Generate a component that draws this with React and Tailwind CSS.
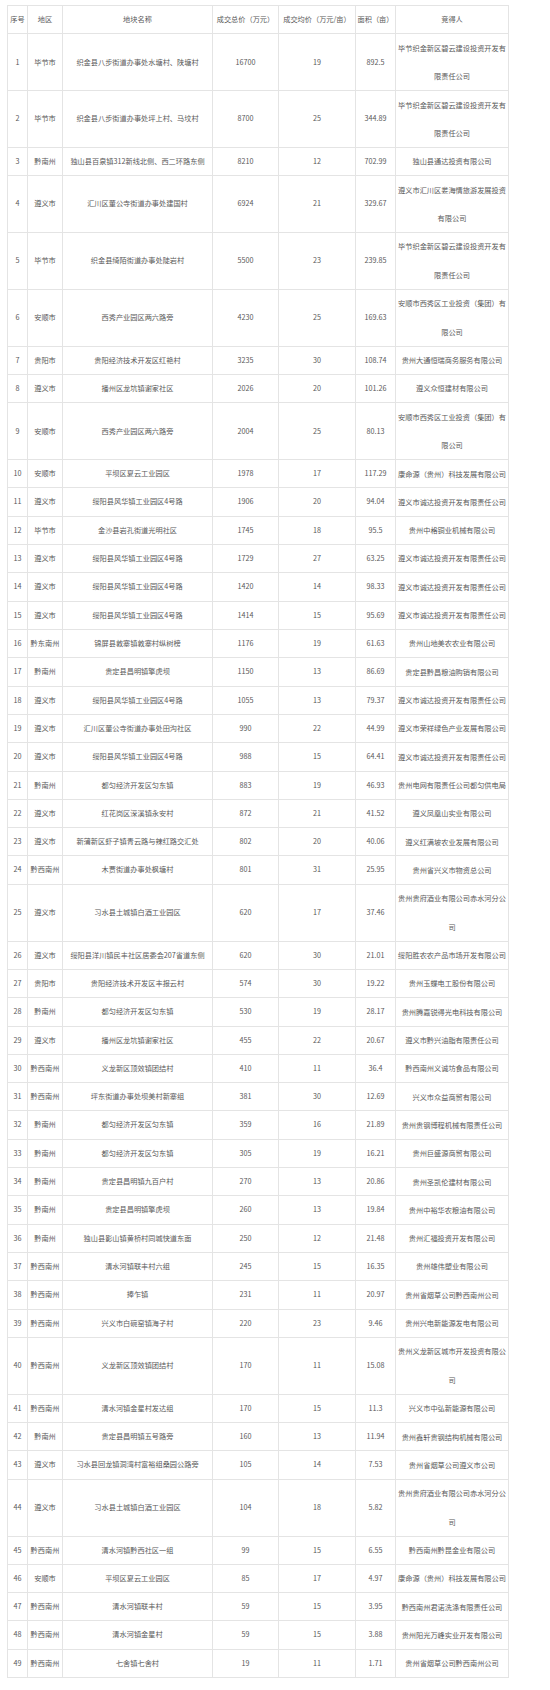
import React from 'react';

const HEAD = ['序号', '地区', '地块名称', '成交总价（万元）', '成交均价（万元/亩）', '面积（亩）', '竞得人'];

// 序号 is the index + 1
const ROWS = [
  ['毕节市', '织金县八步街道办事处水塘村、陕塘村', '16700', '19', '892.5', '毕节织金新区碧云建设投资开发有限责任公司'],
  ['毕节市', '织金县八步街道办事处坪上村、马坟村', '8700', '25', '344.89', '毕节织金新区碧云建设投资开发有限责任公司'],
  ['黔南州', '独山县百泉镇312新线北侧、西二环路东侧', '8210', '12', '702.99', '独山县通达投资有限公司'],
  ['遵义市', '汇川区董公寺街道办事处建国村', '6924', '21', '329.67', '遵义市汇川区娄海情旅游发展投资有限公司'],
  ['毕节市', '织金县绮陌街道办事处陡岩村', '5500', '23', '239.85', '毕节织金新区碧云建设投资开发有限责任公司'],
  ['安顺市', '西秀产业园区两六路旁', '4230', '25', '169.63', '安顺市西秀区工业投资（集团）有限公司'],
  ['贵阳市', '贵阳经济技术开发区红艳村', '3235', '30', '108.74', '贵州大通恒瑞商务服务有限公司'],
  ['遵义市', '播州区龙坑镇谢家社区', '2026', '20', '101.26', '遵义众恒建材有限公司'],
  ['安顺市', '西秀产业园区两六路旁', '2004', '25', '80.13', '安顺市西秀区工业投资（集团）有限公司'],
  ['安顺市', '平坝区夏云工业园区', '1978', '17', '117.29', '康命源（贵州）科技发展有限公司'],
  ['遵义市', '绥阳县风华镇工业园区4号路', '1906', '20', '94.04', '遵义市诚达投资开发有限责任公司'],
  ['毕节市', '金沙县岩孔街道光明社区', '1745', '18', '95.5', '贵州中格铜业机械有限公司'],
  ['遵义市', '绥阳县风华镇工业园区4号路', '1729', '27', '63.25', '遵义市诚达投资开发有限责任公司'],
  ['遵义市', '绥阳县风华镇工业园区4号路', '1420', '14', '98.33', '遵义市诚达投资开发有限责任公司'],
  ['遵义市', '绥阳县风华镇工业园区4号路', '1414', '15', '95.69', '遵义市诚达投资开发有限责任公司'],
  ['黔东南州', '锦屏县敦寨镇敦寨村纵树榜', '1176', '19', '61.63', '贵州山地美农农业有限公司'],
  ['黔南州', '贵定县昌明镇擎虎坝', '1150', '13', '86.69', '贵定县黔昌粮油购销有限公司'],
  ['遵义市', '绥阳县风华镇工业园区4号路', '1055', '13', '79.37', '遵义市诚达投资开发有限责任公司'],
  ['遵义市', '汇川区董公寺街道办事处田沟社区', '990', '22', '44.99', '遵义市荣祥绿色产业发展有限公司'],
  ['遵义市', '绥阳县风华镇工业园区4号路', '988', '15', '64.41', '遵义市诚达投资开发有限责任公司'],
  ['黔南州', '都匀经济开发区匀东镇', '883', '19', '46.93', '贵州电网有限责任公司都匀供电局'],
  ['遵义市', '红花岗区深溪镇永安村', '872', '21', '41.52', '遵义凤凰山实业有限公司'],
  ['遵义市', '新蒲新区虾子镇青云路与辣红路交汇处', '802', '20', '40.06', '遵义红满坡农业发展有限公司'],
  ['黔西南州', '木贾街道办事处枫塘村', '801', '31', '25.95', '贵州省兴义市物资总公司'],
  ['遵义市', '习水县土城镇白酒工业园区', '620', '17', '37.46', '贵州贵府酒业有限公司赤水河分公司'],
  ['遵义市', '绥阳县洋川镇民丰社区居委会207省道东侧', '620', '30', '21.01', '绥阳胜农农产品市场开发有限公司'],
  ['贵阳市', '贵阳经济技术开发区丰报云村', '574', '30', '19.22', '贵州玉蝶电工股份有限公司'],
  ['黔南州', '都匀经济开发区匀东镇', '530', '19', '28.17', '贵州腾嘉锐得光电科技有限公司'],
  ['遵义市', '播州区龙坑镇谢家社区', '455', '22', '20.67', '遵义市黔兴油脂有限责任公司'],
  ['黔西南州', '义龙新区顶效镇团结村', '410', '11', '36.4', '黔西南州义诚坊食品有限公司'],
  ['黔西南州', '坪东街道办事处坝美村新寨组', '381', '30', '12.69', '兴义市众益商贸有限公司'],
  ['黔南州', '都匀经济开发区匀东镇', '359', '16', '21.89', '贵州贵钢博程机械有限责任公司'],
  ['黔南州', '都匀经济开发区匀东镇', '305', '19', '16.21', '贵州巨盛源商贸有限公司'],
  ['黔南州', '贵定县昌明镇九百户村', '270', '13', '20.86', '贵州圣凯伦建材有限公司'],
  ['黔南州', '贵定县昌明镇擎虎坝', '260', '13', '19.84', '贵州中裕华农粮油有限公司'],
  ['黔南州', '独山县影山镇黄桥村同城快道东面', '250', '12', '21.48', '贵州汇福投资开发有限公司'],
  ['黔西南州', '清水河镇联丰村六组', '245', '15', '16.35', '贵州雄伟塑业有限公司'],
  ['黔西南州', '捧乍镇', '231', '11', '20.97', '贵州省烟草公司黔西南州公司'],
  ['黔西南州', '兴义市白碗窑镇海子村', '220', '23', '9.46', '贵州兴电新能源发电有限公司'],
  ['黔西南州', '义龙新区顶效镇团结村', '170', '11', '15.08', '贵州义龙新区城市开发投资有限公司'],
  ['黔西南州', '清水河镇金星村发达组', '170', '15', '11.3', '兴义市中弘新能源有限公司'],
  ['黔南州', '贵定县昌明镇五号路旁', '160', '13', '11.94', '贵州鑫轩贵钢结构机械有限公司'],
  ['遵义市', '习水县回龙镇洞湾村富裕组桑园公路旁', '105', '14', '7.53', '贵州省烟草公司遵义市公司'],
  ['遵义市', '习水县土城镇白酒工业园区', '104', '18', '5.82', '贵州贵府酒业有限公司赤水河分公司'],
  ['黔西南州', '清水河镇黔西社区一组', '99', '15', '6.55', '黔西南州黔昆金业有限公司'],
  ['安顺市', '平坝区夏云工业园区', '85', '17', '4.97', '康命源（贵州）科技发展有限公司'],
  ['黔西南州', '清水河镇联丰村', '59', '15', '3.95', '黔西南州君诺洗涤有限责任公司'],
  ['黔西南州', '清水河镇金星村', '59', '15', '3.88', '贵州阳光万峰实业开发有限公司'],
  ['黔西南州', '七舍镇七舍村', '19', '11', '1.71', '贵州省烟草公司黔西南州公司'],
];

const WIDTHS = ['w-[20px]', 'w-[35px]', 'w-[150px]', 'w-[66px]', 'w-[77px]', 'w-[40px]', 'w-[113px]'];

const cell = 'border border-[#e4e4e4] p-0 text-center align-middle leading-[27.3px] whitespace-normal';

export default function App() {
  return (
    <div className="min-h-[1690px] w-[550px] bg-white pl-[7px] pt-[5px] text-[7.2px] text-[#595959] [font-family:'Noto_Sans_CJK_SC','Liberation_Sans',sans-serif]">
      <table className="w-[501px] table-fixed border-collapse">
        <colgroup>
          {WIDTHS.map((w, i) => (
            <col key={i} className={w} />
          ))}
        </colgroup>
        <thead>
          <tr>
            {HEAD.map((h) => (
              <th key={h} className={`${cell} font-normal`}>
                {h}
              </th>
            ))}
          </tr>
        </thead>
        <tbody>
          {ROWS.map((r, i) => (
            <tr key={i}>
              <td className={cell}>{i + 1}</td>
              {r.slice(0, 5).map((v, j) => (
                <td key={j} className={cell}>
                  {v}
                </td>
              ))}
              <td className={cell}>
                {/* wrapped names sit on a slightly taller line */}
                <div className="-my-[0.6px] leading-[28.5px]">{r[5]}</div>
              </td>
            </tr>
          ))}
        </tbody>
      </table>
    </div>
  );
}
